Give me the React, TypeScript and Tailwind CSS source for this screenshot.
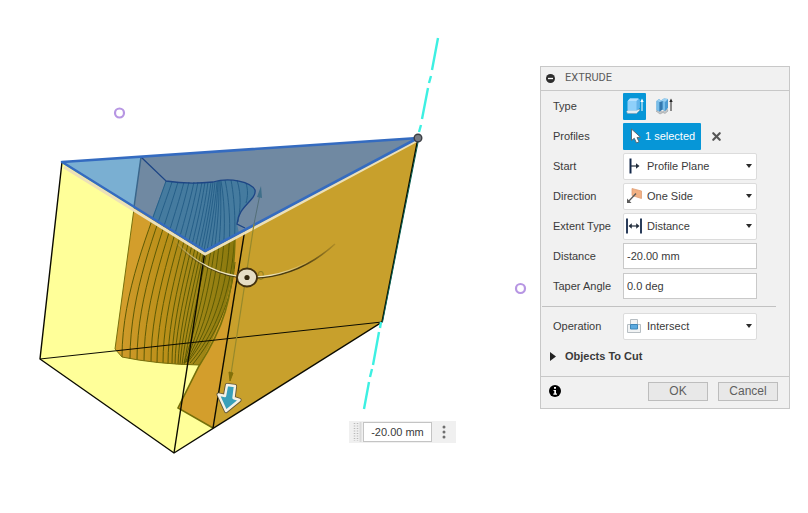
import type { ReactNode } from "react";
import { X } from "lucide-react";

// Section lines of the twisted surface: left half hangs straight, right half bows outwards
const LEFT_LINES = [
  "M166 181 C150 228 122 292 122 357",
  "M172 182 C156 230 130 292 130 359",
  "M178 182 C164 230 137 294 137 360",
  "M184 182 C171 232 144 296 144 361",
  "M189 182 C177 234 151 298 151 362",
  "M194 182 C183 234 157 300 157 363",
  "M198 182 C188 236 163 302 163 363",
  "M202 182 C193 236 168 304 168 364",
  "M205 182 C197 238 172 306 172 364",
  "M208 182 C201 238 176 308 175 364",
  "M211 182 C204 240 180 310 178 364",
  "M213 182 C207 240 184 312 180 364",
  "M215 182 C209 242 188 314 182 365",
  "M217 182 C212 242 192 316 184 365",
];

const RIGHT_LINES = [
  "M218 181 C216 240 200 316 184 363",
  "M219 181 C220 240 205 320 185 363",
  "M220 181 C224 238 214 314 186 362",
  "M221 181 C230 232 222 312 187 362",
  "M225 180 C234 222 234 304 188 362",
  "M231 180 C240 228 236 310 190 363",
  "M237 180 C242 196 240 210 238 222",
  "M235 262 C232 302 214 338 193 364",
  "M246 183 C248 190 248 196 246 203",
];

function Model() {
  return (
    <svg viewBox="0 0 540 513" className="block w-full" role="img" aria-label="Extrude preview">
      <defs>
        <linearGradient id="surface" x1="0" x2="1" y1="0" y2="0">
          <stop offset="0" stopColor="#cf9a2a" />
          <stop offset="0.35" stopColor="#bb9019" />
          <stop offset="0.62" stopColor="#a38817" />
          <stop offset="1" stopColor="#86760c" />
        </linearGradient>
        <linearGradient id="arc" x1="0" x2="1" y1="0" y2="0">
          <stop offset="0" stopColor="#efe6bd" stopOpacity="0" />
          <stop offset="0.2" stopColor="#efe6bd" />
          <stop offset="0.6" stopColor="#efe6bd" />
          <stop offset="0.85" stopColor="#efe6bd" stopOpacity="0" />
        </linearGradient>
        <linearGradient id="arcShade" x1="0" x2="1" y1="0" y2="0">
          <stop offset="0" stopColor="#4a3c10" stopOpacity="0" />
          <stop offset="0.3" stopColor="#4a3c10" />
          <stop offset="0.8" stopColor="#4a3c10" />
          <stop offset="1" stopColor="#4a3c10" stopOpacity="0.2" />
        </linearGradient>
        <clipPath id="below">
          <path d="M62 162 L205 251 L418 138 V460 H30 V162Z" />
        </clipPath>
      </defs>

      {/* Target body */}
      <path d="M62 162 L418 138 L382 322 L174 453 L40 359Z" fill="#ffff99" />
      <g clipPath="url(#below)">
        <path d="M141 157 L115 349 L122 357 Q155 364 199 365 L178 408 L213 428 L382 322 L418 138Z" fill="#d39e2c" />
        <path d="M166 181 C150 228 122 292 122 357 Q155 364 199 365 C222 325 234 290 235 236 L240 170Z" fill="url(#surface)" />
        <path d="M245 228 L213 428 L382 322 L418 138Z" fill="#c8a02c" />
        <g fill="none" stroke="#5c5a05" strokeWidth="1">
          {LEFT_LINES.map((d) => <path key={d} d={d} />)}
          {RIGHT_LINES.map((d) => <path key={d} d={d} />)}
          <path d="M141 157 L115 349 L122 357 Q155 364 199 365" stroke="#77700e" />
        </g>
        <path d="M235 236 C234 300 222 330 199 366 L178 408 L213 428" fill="none" stroke="#75700a" strokeWidth="1.6" />
      </g>

      {/* Highlighted profile */}
      <path d="M62 162 L418 138 L205 251Z" fill="#7089a2" />
      <path d="M62 162 L141 157 L134 207Z" fill="#7aafd2" />
      <path d="M166 181 C185 184 203 183 213 182 C230 177 251 182 255 190 C257 200 238 206 237 224 L239 233 L205 251 L152 218Z" fill="#457b9f" />
      <clipPath id="top">
        <path d="M62 162 L418 138 L205 251Z" />
      </clipPath>
      <g clipPath="url(#top)" fill="none" stroke="#265f88" strokeWidth="1">
        {LEFT_LINES.map((d) => <path key={d} d={d} />)}
        {RIGHT_LINES.map((d) => <path key={d} d={d} />)}
        <path d="M141 157 L134 207" stroke="#3a668b" strokeWidth="1.5" />
        <path d="M141 157 L166 181 C185 184 203 183 213 182 C230 177 251 182 255 190 C257 200 238 206 237 224 L245 228" stroke="#1d4585" strokeWidth="1.3" />
      </g>

      {/* Body edges */}
      <g fill="none" stroke="#0b0b00" strokeWidth="1.4">
        <path d="M62 162 L40 359 L174 453 L382 322 L418 138" />
        <path d="M205 251 L174 453" />
        <path d="M245 229 L213 428" />
        <path d="M40 359 L382 322" strokeWidth="1" />
      </g>
      <path d="M64 167 L205 254 L416 141" fill="none" stroke="#ece0b8" strokeWidth="3" />
      <path d="M418 138 L62 162 L205 251Z" fill="none" stroke="#346bc0" strokeWidth="2.6" strokeLinejoin="round" />

      {/* Construction axis */}
      <g stroke="#3df0e2" strokeWidth="2.4">
        <path d="M438 38 L432 70 M431 76 L429 83 M428 88 L422 119 M421 125 L419 132" />
        <path d="M381 322 L380 328 M379 332 L373 365 M372 369 L370 377 M369 382 L364 409" />
      </g>
      <path d="M418.500 140 L382.500 322" stroke="#075f50" strokeWidth="1" />
      <circle cx="418" cy="138" r="3.800" fill="#777b82" stroke="#3c3f45" strokeWidth="1.4" />

      {/* Distance dimension */}
      <path d="M260 194 L254 224" stroke="#536f79" strokeWidth="1" />
      <path d="M254 224 L231 374" stroke="#96882b" strokeWidth="1.2" />
      <path d="M261 186 L262 198 L257 197Z" fill="#3f6f8a" />
      <path d="M230 381 L233 373 L229 372Z" fill="#827009" stroke="#827009" />
      <text x="257" y="280" fontSize="13" fill="#95801c" fontFamily="Liberation Sans, sans-serif">0</text>

      {/* Taper manipulator */}
      <path d="M174 241 C195 265 222 277 247 278 C285 279 313 264 335 244" fill="none" stroke="url(#arcShade)" strokeWidth="1.6" />
      <path d="M174 240 C195 264 222 276 247 277 C285 278 313 262 335 243" fill="none" stroke="url(#arc)" strokeWidth="1.2" />
      <ellipse cx="247" cy="277.500" rx="10" ry="9" fill="#e6ddc4" stroke="#43310f" strokeWidth="1.8" />
      <circle cx="247" cy="277.500" r="2.600" fill="#35280d" />

      {/* Distance arrow */}
      <g fill="#39a0b9" strokeLinejoin="round">
        <path d="M227 385 L235 386 L233.500 398 L239.500 400 L226 411 L218.500 394.500 L225 396Z" stroke="#5e5639" strokeWidth="4.200" />
        <path d="M227 385 L235 386 L233.500 398 L239.500 400 L226 411 L218.500 394.500 L225 396Z" stroke="#f5f2e6" strokeWidth="2.400" />
      </g>

      {/* Sketch points */}
      <circle cx="119.500" cy="113" r="4.500" fill="none" stroke="#b796e3" strokeWidth="2.2" />
      <circle cx="520.500" cy="288.500" r="4.500" fill="none" stroke="#b796e3" strokeWidth="2.2" />
    </svg>
  );
}

function ExtrudeIcon() {
  return (
    <svg viewBox="0 0 18 18" className="size-[18px]" aria-hidden="true">
      <path d="M.500 14.500 L2 13 H11 L13.500 12 V13.500 L10.500 16.500 H1.500Z" fill="#e3edf3" stroke="#7f9cac" strokeWidth=".6" />
      <path d="M1.500 4.500 Q1.500 3.500 4 1.500 H12 Q13.500 1.500 13.500 3 V10.500 L10.500 13.500 H2.500 Q1.500 13.500 1.500 12.500Z" fill="#8fd0fa" />
      <path d="M2 4 L4 1.500 H12.500 L10.500 4Z" fill="#b5e0fd" />
      <path d="M10.500 4 L13 1.800 L13.500 3 V10.500 L10.500 13.500Z" fill="#62b3ea" />
      <path d="M16 14 V4" stroke="#fff" />
      <path d="M14.300 5 L16 1.500 L17.700 5Z" fill="#fff" />
    </svg>
  );
}

function ThinExtrudeIcon() {
  return (
    <svg viewBox="0 0 18 18" className="size-[18px]" aria-hidden="true">
      <path d="M1 14 L4 13 L7 15 L12 12 L13 14 L10 16.500 L8 15.500 L5 17Z" fill="#c4c7c9" stroke="#8c9194" strokeWidth=".5" />
      <path d="M1.500 4 L4 2 L6 3.500 L9 1.500 L13 2 V11 L10 14 L7.500 12.500 L4.500 14.500 L1.500 13Z" fill="#4b9bd2" />
      <path d="M1.500 4 L4.500 5 V14.500 L1.500 13Z M7.500 4 L10 5 V14 L7.500 12.500Z" fill="#78bde9" />
      <path d="M4.500 5 L7.500 4 V12.500 L4.500 14.500Z" fill="#3378ae" />
      <path d="M1.500 4 L4 2 L6 3.500 L9 1.500 L13 2 L10 5 L7.500 4 L4.500 5Z" fill="#9bd1f3" />
      <path d="M16 14 V4" stroke="#252525" />
      <path d="M14.300 5 L16 1.500 L17.700 5Z" fill="#252525" />
    </svg>
  );
}

function CursorIcon() {
  return (
    <svg viewBox="0 0 12 16" className="h-4 w-3" aria-hidden="true">
      <path d="M1.500 1 V12.500 L4.300 10.300 L6.500 15 L9 13.800 L7 9.500 L10.500 9.200Z" fill="#fff" stroke="#5d6c75" strokeWidth="1" />
    </svg>
  );
}

function StartIcon() {
  return (
    <svg viewBox="0 0 16 16" className="size-4" aria-hidden="true">
      <path d="M4.500 .500 V15.500" stroke="#14294a" strokeWidth="2" />
      <path d="M5 8 H12" stroke="#222d3c" strokeWidth="1.2" />
      <path d="M10 5.300 L13.500 8 L10 10.700Z" fill="#222d3c" />
    </svg>
  );
}

function DirectionIcon() {
  return (
    <svg viewBox="0 0 16 16" className="size-4" aria-hidden="true">
      <path d="M6 .500 L15.500 3 V10.500 L6 7.500Z" fill="#f2b184" stroke="#dfa077" strokeWidth=".8" />
      <path d="M10 5.500 L2 14" stroke="#5b5b5b" strokeWidth="1.3" />
      <path d="M1 10.500 V15 H5.500Z" fill="#5b5b5b" />
    </svg>
  );
}

function DistanceIcon() {
  return (
    <svg viewBox="0 0 16 16" className="size-4" aria-hidden="true">
      <path d="M1 .500 V15.500 M15 .500 V15.500" stroke="#14294a" strokeWidth="1.8" />
      <path d="M4 8 H12" stroke="#222d3c" strokeWidth="1.2" />
      <path d="M5.800 5.300 L2.500 8 L5.800 10.700Z M10.200 5.300 L13.500 8 L10.200 10.700Z" fill="#222d3c" />
    </svg>
  );
}

function IntersectIcon() {
  return (
    <svg viewBox="0 0 16 16" className="size-4" aria-hidden="true">
      <path d="M1.500 6.500 H14.500 V14.500 H1.500Z M4.500 1.500 H11.500 V10.500 H4.500Z" fill="#f1f3f4" stroke="#b7bec3" />
      <path d="M4.500 6.500 H11.500 V11 H4.500Z" fill="#5aa9df" stroke="#3d86b9" />
    </svg>
  );
}

function Row({ id, label, children }: { id?: string; label: string; children: ReactNode }) {
  return (
    <div className="flex h-[30px] items-center pl-3">
      {id ? (
        <label htmlFor={id} className="w-[70px] shrink-0">{label}</label>
      ) : (
        <span className="w-[70px] shrink-0">{label}</span>
      )}
      {children}
    </div>
  );
}

function SelectRow({ id, label, icon, options }: { id: string; label: string; icon: ReactNode; options: string[] }) {
  return (
    <Row id={id} label={label}>
      <div className="relative mr-8 flex-1">
        <select
          id={id}
          className="block h-[27px] w-full appearance-none rounded-xs border border-[#dcdcdc] bg-white pr-5 pl-[23px] outline-none"
        >
          {options.map((o) => <option key={o}>{o}</option>)}
        </select>
        <span className="pointer-events-none absolute inset-y-0 left-[3px] flex items-center">{icon}</span>
        <span className="pointer-events-none absolute inset-y-0 right-[5px] flex items-center">
          <svg viewBox="0 0 6 4" className="h-1 w-1.5" aria-hidden="true">
            <path d="M0 0 H6 L3 4Z" fill="#2b2b2b" />
          </svg>
        </span>
      </div>
    </Row>
  );
}

function InputRow({ id, label, value }: { id: string; label: string; value: string }) {
  return (
    <Row id={id} label={label}>
      <input
        id={id}
        defaultValue={value}
        className="mr-8 h-[26px] min-w-0 flex-1 border border-[#c9c9c9] bg-white px-[3px] outline-none"
      />
    </Row>
  );
}

function ExtrudePanel() {
  return (
    <aside className="mt-[66px] mr-[18px] w-[250px] shrink-0 self-start border border-[#c8c8c8] bg-[#f1f1f1]">
      <header className="flex h-6 items-center gap-2.5 border-b border-[#c8c8c8] pl-[5px]">
        <button aria-label="Collapse">
          <svg viewBox="0 0 9 9" className="size-[9px]">
            <circle cx="4.500" cy="4.500" r="4.500" fill="#2e2e2e" />
            <path d="M2 4.500 H7" stroke="#fff" strokeWidth="1.3" />
          </svg>
        </button>
        <h2 className="font-[Roboto,sans-serif] text-[#5c5c5c]">EXTRUDE</h2>
      </header>

      <Row label="Type">
        <div className="flex gap-1.5">
          <button aria-label="Extrude" aria-pressed="true" className="flex h-[27px] w-[23px] items-center justify-center rounded-[1px] bg-[#0696d7]">
            <ExtrudeIcon />
          </button>
          <button aria-label="Thin extrude" aria-pressed="false" className="flex h-[27px] w-[23px] items-center justify-center">
            <ThinExtrudeIcon />
          </button>
        </div>
      </Row>
      <Row label="Profiles">
        <button className="flex h-[27px] w-[78px] items-center gap-[3px] rounded-[1px] bg-[#0696d7] pl-[7px] text-white">
          <CursorIcon />
          1 selected
        </button>
        <button aria-label="Clear selection" className="ml-[9px] text-[#555]">
          <X className="size-[13px]" strokeWidth={4} />
        </button>
      </Row>
      <SelectRow id="start" label="Start" icon={<StartIcon />} options={["Profile Plane"]} />
      <SelectRow id="direction" label="Direction" icon={<DirectionIcon />} options={["One Side"]} />
      <SelectRow id="extent" label="Extent Type" icon={<DistanceIcon />} options={["Distance"]} />
      <InputRow id="distance" label="Distance" value="-20.00 mm" />
      <InputRow id="taper" label="Taper Angle" value="0.0 deg" />
      <hr className="mt-[5px] mr-[13px] mb-1 ml-px border-[#c2c2c2]" />
      <SelectRow id="operation" label="Operation" icon={<IntersectIcon />} options={["Intersect"]} />
      <button className="mb-[5px] flex h-[30px] items-center gap-[9px] pl-[9px] font-bold">
        <svg viewBox="0 0 6 9" className="h-[9px] w-1.5" aria-hidden="true">
          <path d="M0 0 L6 4.500 L0 9Z" fill="#222" />
        </svg>
        Objects To Cut
      </button>

      <footer className="flex h-8 items-center gap-2.5 border-t border-[#c8c8c8] pr-[11px] pb-[3px] pl-2 text-xs text-[#5f5f5f]">
        <button aria-label="Information" className="mr-auto">
          <svg viewBox="0 0 12 12" className="size-3">
            <circle cx="6" cy="6" r="6" fill="#000" />
            <path d="M5 2 H7 V3.800 H5Z M4.500 5 H7 V8.500 H8 V9.700 H4.300 V8.500 H5.300 V6 H4.500Z" fill="#fff" />
          </svg>
        </button>
        <button className="h-[19px] w-[60px] border border-[#bdbdbd] bg-[#e8e8e8] leading-4">OK</button>
        <button className="h-[19px] w-[60px] border border-[#bdbdbd] bg-[#e8e8e8] leading-4">Cancel</button>
      </footer>
    </aside>
  );
}

function ValueBox() {
  return (
    <div className="absolute top-[421px] left-[349px] flex h-[22px] w-[107px] items-center bg-[#f0f0f0]">
      <svg viewBox="0 0 14 22" className="h-[22px] w-3.5 shrink-0" aria-hidden="true">
        <path d="M5.500 2 V20 M8.500 2 V20" stroke="#b9b9b9" strokeWidth="1.5" strokeDasharray="1 1.500" />
        <path d="M11.500 1 V21" stroke="#dadada" strokeWidth="2" />
      </svg>
      <input
        aria-label="Distance value"
        defaultValue="-20.00 mm"
        className="h-5 w-[69px] border border-[#c4c4c4] bg-white text-center outline-none"
      />
      <button aria-label="More options" className="flex flex-1 justify-center">
        <svg viewBox="0 0 4 14" className="h-3.5 w-1">
          <circle cx="2" cy="2" r="1.500" fill="#6f6f6f" />
          <circle cx="2" cy="7" r="1.500" fill="#6f6f6f" />
          <circle cx="2" cy="12" r="1.500" fill="#6f6f6f" />
        </svg>
      </button>
    </div>
  );
}

export default function App() {
  return (
    <main className="flex min-h-screen bg-white font-['Liberation_Sans',sans-serif] text-[11px] text-[#3a3a3a]">
      <section className="relative min-w-0 flex-1">
        <Model />
        <ValueBox />
      </section>
      <ExtrudePanel />
    </main>
  );
}
